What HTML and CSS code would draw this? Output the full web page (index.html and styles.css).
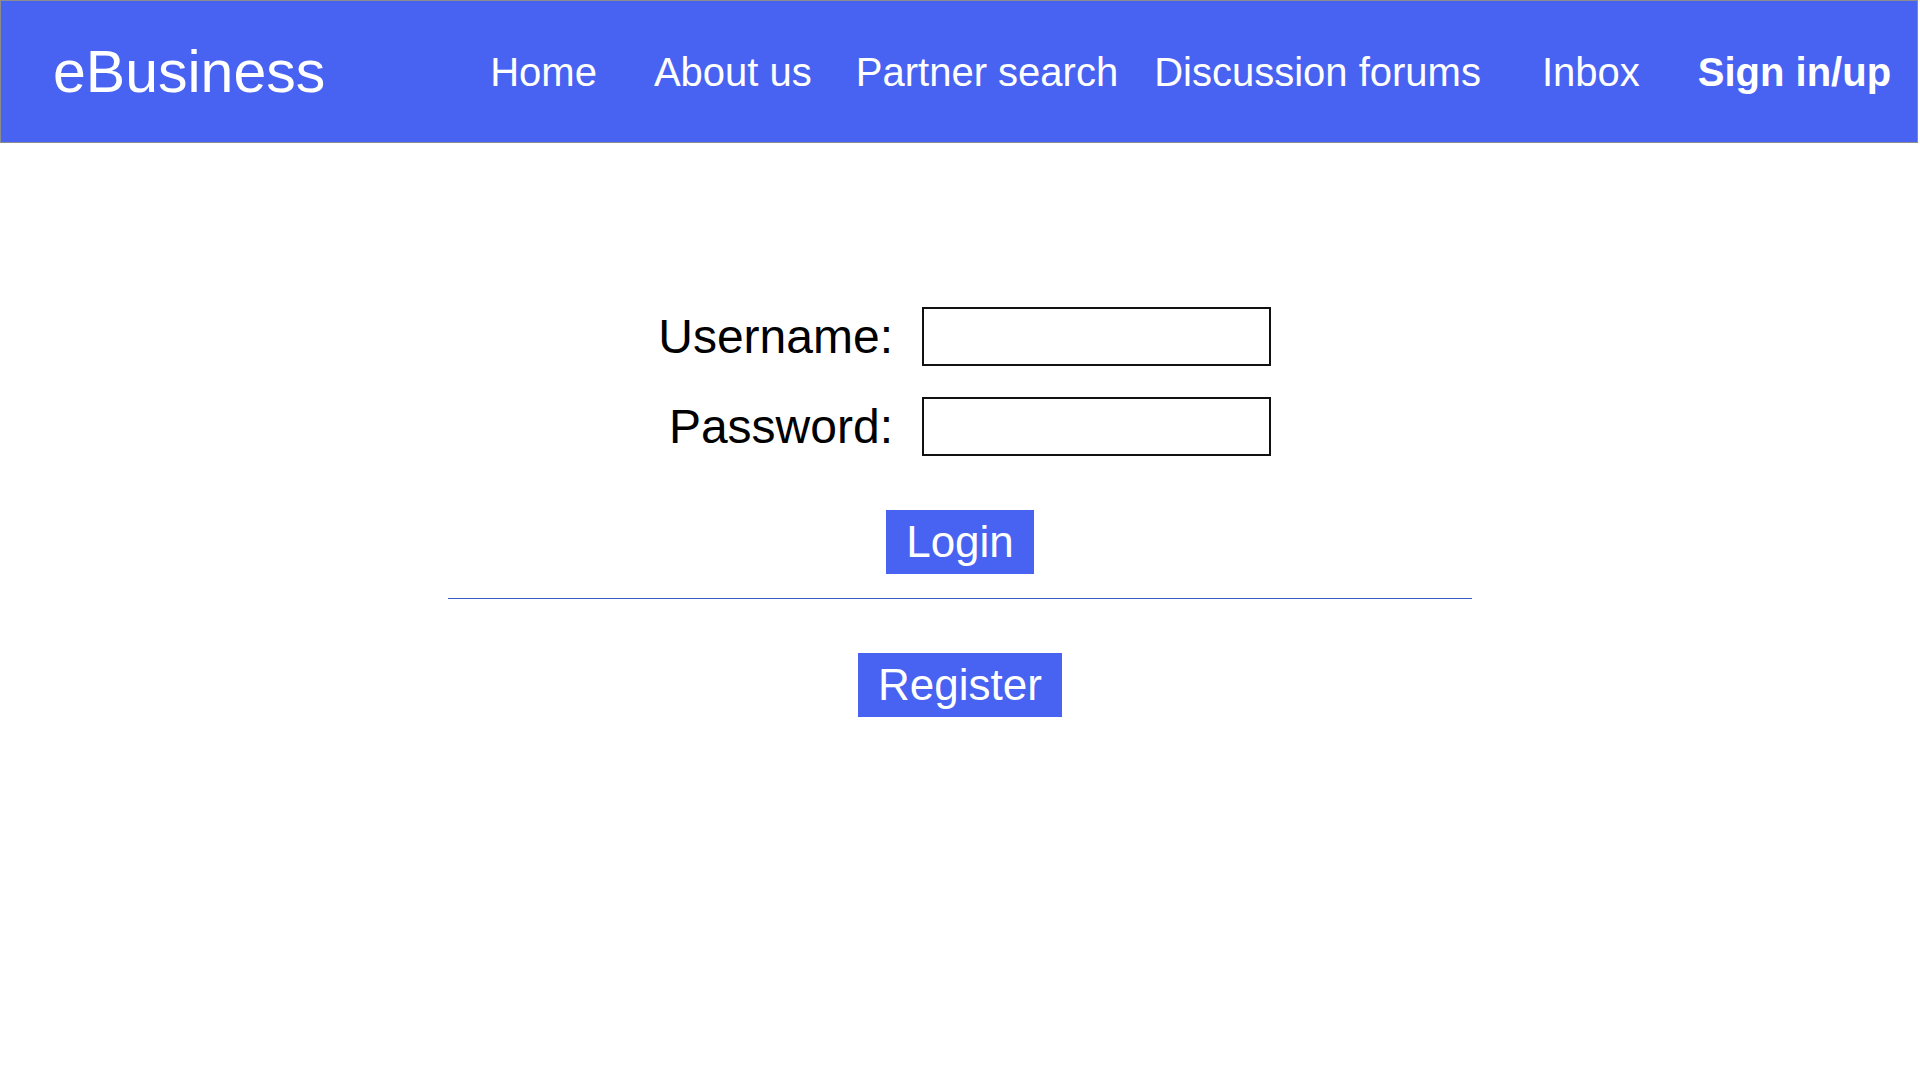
FILE: index.html
```html
<!DOCTYPE html>
<html lang="en">
<head>
<meta charset="utf-8">
<title>eBusiness - Sign in</title>
<link rel="stylesheet" href="styles.css">
</head>
<body>
<header class="topbar">
  <div class="logo">eBusiness</div>
  <nav class="nav">
    <a class="nav-link nav-home" href="#">Home</a>
    <a class="nav-link nav-about" href="#">About us</a>
    <a class="nav-link nav-partner" href="#">Partner search</a>
    <a class="nav-link nav-forums" href="#">Discussion forums</a>
    <a class="nav-link nav-inbox" href="#">Inbox</a>
    <a class="nav-link nav-sign active" href="#">Sign in/up</a>
  </nav>
</header>
<main class="content">
  <form class="login-form">
    <label class="field-label" for="username">Username:</label>
    <input class="field-input" id="username" type="text">
    <label class="field-label" for="password">Password:</label>
    <input class="field-input" id="password" type="password">
  </form>
  <div class="btn-row login-row">
    <button class="btn" type="button">Login</button>
  </div>
  <hr class="divider">
  <div class="btn-row register-row">
    <button class="btn" type="button">Register</button>
  </div>
</main>
</body>
</html>
```
FILE: styles.css
```css
html, body {
  margin: 0;
  padding: 0;
  background: #ffffff;
  font-family: "Liberation Sans", Arial, Helvetica, sans-serif;
}

.topbar {
  box-sizing: border-box;
  height: 143px;
  margin-right: 2px;
  background: #4863f2;
  border: 1px solid #8c8c8c;
  display: flex;
  align-items: center;
  padding-left: 52px;
  color: #ffffff;
}

.logo {
  font-size: 59px;
  line-height: 1.15;
  color: #ffffff;
  padding-top: 2px;
}

.nav {
  display: flex;
  align-items: center;
}

.nav-link {
  font-size: 40px;
  line-height: 1.15;
  color: #ffffff;
  text-decoration: none;
}

.nav-home { margin-left: 165px; }
.nav-about { margin-left: 57px; }
.nav-partner { margin-left: 44px; }
.nav-forums { margin-left: 36px; }
.nav-inbox { margin-left: 61px; }
.nav-sign { margin-left: 58px; }

.nav-link.active {
  font-weight: bold;
}

.content {
  display: flex;
  flex-direction: column;
  align-items: center;
  padding-top: 164px;
}

.login-form {
  display: grid;
  grid-template-columns: 244px 349px;
  column-gap: 29px;
  row-gap: 31px;
  align-items: center;
  margin: 0;
}

.field-label {
  font-size: 48px;
  color: #000000;
  text-align: right;
  justify-self: end;
  line-height: 1.15;
}

.field-input {
  box-sizing: border-box;
  width: 349px;
  height: 59px;
  border: 2px solid #111111;
  border-radius: 0;
  background: #ffffff;
  margin: 0;
  padding: 0 8px;
  font-family: "Liberation Sans", Arial, sans-serif;
  font-size: 28px;
  outline: none;
}

.btn-row {
  display: flex;
  justify-content: center;
}

.login-row {
  margin-top: 54px;
}

.btn {
  box-sizing: border-box;
  height: 64px;
  padding: 0 20px;
  border: none;
  border-radius: 0;
  background: #4863f2;
  color: #ffffff;
  font-family: "Liberation Sans", Arial, sans-serif;
  font-size: 44px;
  line-height: 64px;
  cursor: pointer;
}

.divider {
  width: 1024px;
  height: 0;
  border: none;
  border-top: 1px solid #3a5cc6;
  margin: 24px 0 0 0;
}

.register-row {
  margin-top: 54px;
}
```
